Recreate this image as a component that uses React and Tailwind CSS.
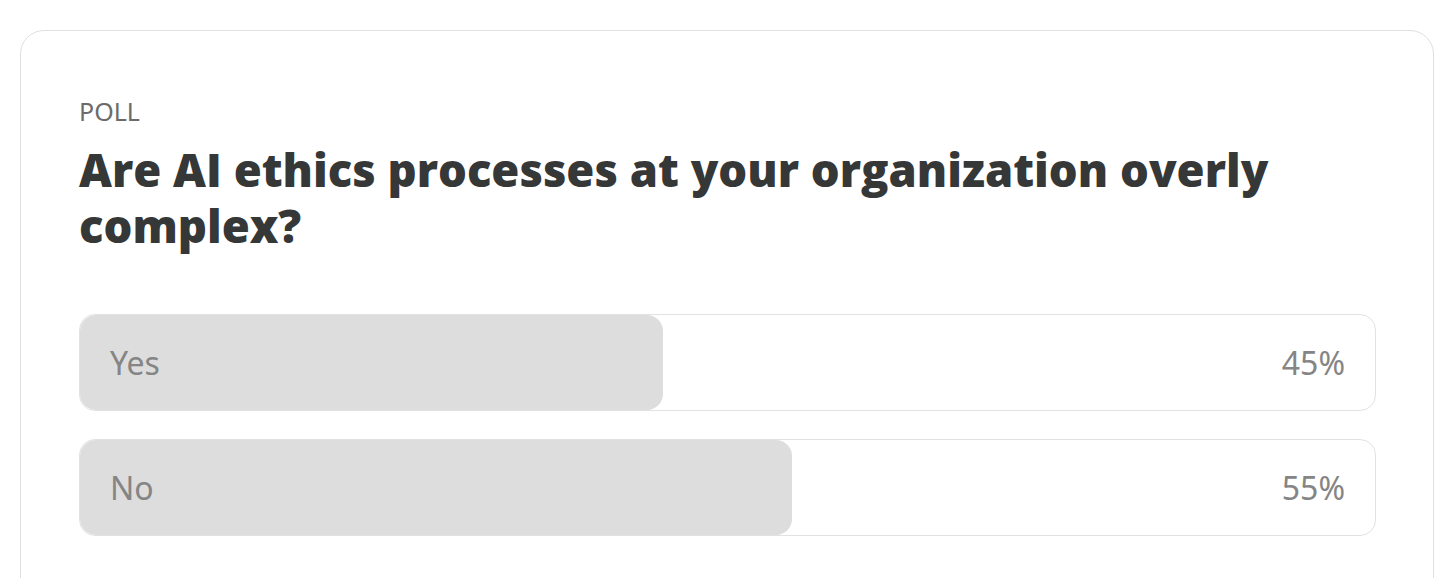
import React from 'react';

const options = [
  { label: 'Yes', pct: 45 },
  { label: 'No', pct: 55 },
];

const PollOption = ({ label, pct }) => (
  <div className="relative h-[97px] rounded-2xl border border-[#e2e2e2] overflow-hidden">
    <div
      className="absolute left-0 top-0 bottom-0 bg-[#dddddd] rounded-2xl"
      style={{ width: `${pct}%` }}
    />
    <div className="relative flex h-full items-center justify-between px-[30px] text-[32px] text-[#858585]">
      <span>{label}</span>
      <span>{pct}%</span>
    </div>
  </div>
);

export default function App() {
  return (
    <div className="h-screen overflow-hidden bg-white pt-[30px] pl-[20px] pr-[22px] font-['Noto_Sans','Open_Sans',sans-serif]">
      <div className="rounded-[24px] border border-[#e0e0e0] pl-[58px] pr-[57px] pt-[62px] pb-[80px]">
        <div className="text-[25px] leading-[36px] text-[#6b6b6b]">POLL</div>
        <h2 className="mt-[12px] font-['Open_Sans',sans-serif] font-extrabold text-[45.4px] leading-[56px] text-[#363737]">
          Are AI ethics processes at your organization overly complex?
        </h2>
        <div className="mt-[61px] flex flex-col gap-[28px]">
          {options.map((o) => (
            <PollOption key={o.label} {...o} />
          ))}
        </div>
      </div>
    </div>
  );
}
